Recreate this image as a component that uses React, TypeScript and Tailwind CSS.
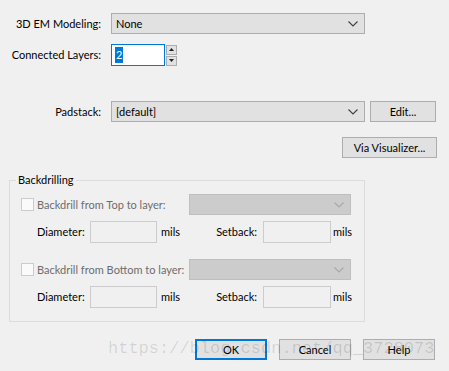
import { ReactNode } from 'react';

function Chevron({ color = '#404040' }: { color?: string }) {
  return (
    <svg width="10" height="6" viewBox="0 0 10 6" className="shrink-0">
      <polyline points="0.5,0.5 5,5 9.5,0.5" fill="none" stroke={color} strokeWidth="1.1" />
    </svg>
  );
}

function Select({ value, width, disabled }: { value?: string; width: string; disabled?: boolean }) {
  return (
    <div
      className={`${width} h-[21px] flex items-center justify-between pl-[4px] pr-[6px] border ${
        disabled ? 'bg-[#cccccc] border-[#bfbfbf]' : 'bg-[#e1e1e1] border-[#adadad]'
      }`}
    >
      <span className="text-black">{value}</span>
      <Chevron color={disabled ? '#a8a8a8' : '#404040'} />
    </div>
  );
}

function Button({ children, width, primary }: { children: ReactNode; width: string; primary?: boolean }) {
  return (
    <button
      className={`${width} h-[21px] flex items-center justify-center bg-[#e1e1e1] text-black whitespace-nowrap ${
        primary ? 'border-2 border-[#0078d7]' : 'border border-[#adadad]'
      }`}
    >
      {children}
    </button>
  );
}

function DisabledInput({ width }: { width: string }) {
  return <div className={`${width} h-[22px] border border-[#cccccc] bg-[#f0f0f0]`} />;
}

function BackdrillRows({ label }: { label: string }) {
  return (
    <>
      <div className="flex items-center h-[21px]">
        <span className="ml-[11px] w-[13px] h-[13px] border border-[#cccccc] bg-[#fafafa]" />
        <span className="ml-[3px] w-[152px] text-[#6d6d6d]">{label}</span>
        <Select width="w-[162px]" disabled />
      </div>
      <div className="flex items-center h-[22px] mt-[6px]">
        <span className="ml-[27px] w-[53px]">Diameter:</span>
        <DisabledInput width="w-[67px]" />
        <span className="ml-[4px] w-[40px]">mils</span>
        <span className="w-[56px] text-right">Setback:</span>
        <span className="ml-[6px]">
          <DisabledInput width="w-[68px]" />
        </span>
        <span className="ml-[2px]">mils</span>
      </div>
    </>
  );
}

export default function App() {
  return (
    <div className="relative w-[449px] h-[371px] overflow-hidden bg-[#f0f0f0] text-[11px] leading-[16px] text-black whitespace-nowrap font-['Lato',sans-serif]">
      <div className="flex items-center h-[21px] mt-[13px]">
        <span className="w-[101px] text-right">3D EM Modeling:</span>
        <span className="ml-[10px]">
          <Select value="None" width="w-[254px]" />
        </span>
      </div>

      <div className="flex items-center h-[22px] mt-[10px]">
        <span className="w-[101px] text-right">Connected Layers:</span>
        <div className="ml-[10px] w-[54px] h-[22px] border border-[#0078d7] bg-white flex items-center pl-[3px]">
          <span className="bg-[#0078d7] text-white px-[1px]">2</span>
        </div>
        <div className="ml-[1px] flex flex-col gap-[1px]">
          <div className="w-[11px] h-[10px] border border-[#adadad] bg-[#e1e1e1] flex items-center justify-center">
            <svg width="5" height="3" viewBox="0 0 5 3">
              <polygon points="0,3 2.5,0 5,3" fill="#202020" />
            </svg>
          </div>
          <div className="w-[11px] h-[10px] border border-[#adadad] bg-[#e1e1e1] flex items-center justify-center">
            <svg width="5" height="3" viewBox="0 0 5 3">
              <polygon points="0,0 2.5,3 5,0" fill="#202020" />
            </svg>
          </div>
        </div>
      </div>

      <div className="flex items-center h-[21px] mt-[35px]">
        <span className="w-[101px] text-right">Padstack:</span>
        <span className="ml-[10px]">
          <Select value="[default]" width="w-[254px]" />
        </span>
        <span className="ml-[5px]">
          <Button width="w-[66px]">Edit...</Button>
        </span>
      </div>

      <div className="flex mt-[15px] pl-[342px]">
        <Button width="w-[95px]">Via Visualizer...</Button>
      </div>

      <fieldset className="ml-[9px] mt-[14px] w-[356px] border border-[#dcdcdc] pt-[6px] pb-[13px]">
        <legend className="ml-[6px] px-[2px]">Backdrilling</legend>
        <BackdrillRows label="Backdrill from Top to layer:" />
        <div className="mt-[16px]">
          <BackdrillRows label="Backdrill from Bottom to layer:" />
        </div>
      </fieldset>

      <div className="flex justify-end gap-[12px] pr-[14px] mt-[17px]">
        <Button width="w-[72px]" primary>
          OK
        </Button>
        <Button width="w-[72px]">Cancel</Button>
        <Button width="w-[72px]">Help</Button>
      </div>

      <div className="absolute left-[108px] top-[340px] text-[17px] leading-none text-[rgba(0,0,0,0.13)] font-['Liberation_Mono',monospace]">
        https://blog.csdn.net/qq_3728073
      </div>
    </div>
  );
}
